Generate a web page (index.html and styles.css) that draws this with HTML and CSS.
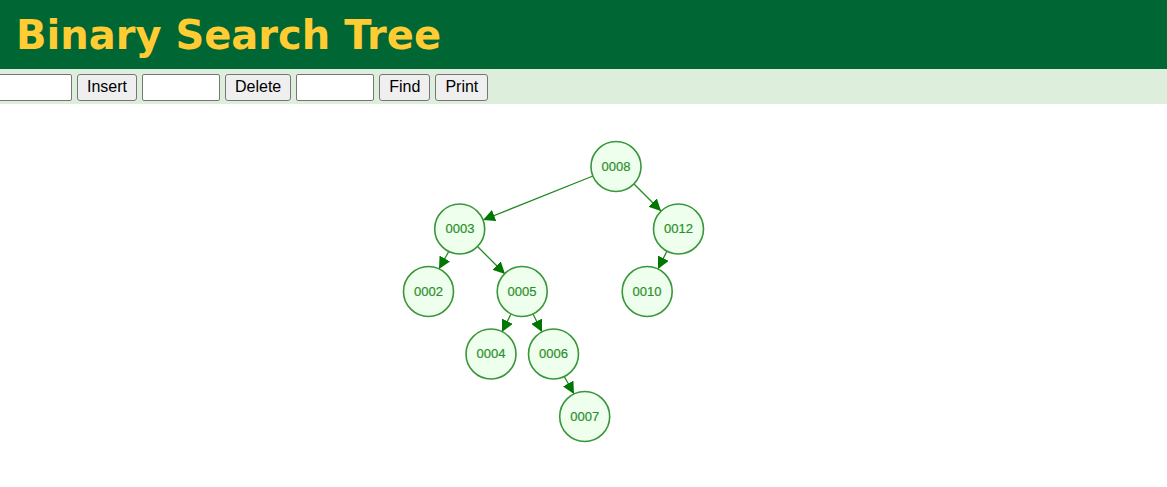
FILE: index.html
```html
<!DOCTYPE html>
<html lang="en">
<head>
<meta charset="utf-8">
<title>Binary Search Tree</title>
<link rel="stylesheet" href="styles.css">
</head>
<body>
<header class="header"><h1 class="title">Binary Search Tree</h1></header>
<form class="controls">
  <input class="field" type="text" aria-label="Value to insert">
  <button class="button" type="button">Insert</button>
  <input class="field" type="text" aria-label="Value to delete">
  <button class="button" type="button">Delete</button>
  <input class="field" type="text" aria-label="Value to find">
  <button class="button" type="button">Find</button>
  <button class="button" type="button">Print</button>
</form>
<main>
  <svg class="tree" viewBox="0 0 1167 380" role="img" aria-label="Tree">
    <defs>
      <marker id="arrow" viewBox="0 0 12 12" refX="12" refY="6" markerWidth="12" markerHeight="12" markerUnits="userSpaceOnUse" orient="auto">
        <path class="arrowhead" d="M0 0L12 6L0 12Z"/>
      </marker>
    </defs>
    <g class="edges">
      <path d="M593 72L483 116"/>
      <path d="M634 80L661 107"/>
      <path d="M667 147L658 165"/>
      <path d="M449 147L439 165"/>
      <path d="M478 143L505 170"/>
      <path d="M511 210L502 228"/>
      <path d="M533 210L542 228"/>
      <path d="M564 272L574 290"/>
    </g>
    <g class="nodes">
      <circle cx="616" cy="62.5" r="25"/><text x="616" y="67">0008</text>
      <circle cx="459.7" cy="125" r="25"/><text x="460" y="129">0003</text>
      <circle cx="678.5" cy="125" r="25"/><text x="678.5" y="129">0012</text>
      <circle cx="428.5" cy="187.5" r="25"/><text x="428.5" y="192">0002</text>
      <circle cx="522.2" cy="187.5" r="25"/><text x="522" y="192">0005</text>
      <circle cx="647.2" cy="187.5" r="25"/><text x="647" y="192">0010</text>
      <circle cx="491" cy="250" r="25"/><text x="491" y="254">0004</text>
      <circle cx="553.5" cy="250" r="25"/><text x="553.5" y="254">0006</text>
      <circle cx="584.7" cy="312.5" r="25"/><text x="584.7" y="317">0007</text>
    </g>
  </svg>
</main>
</body>
</html>
```
FILE: styles.css
```css
body {
  margin: 0;
  background: #fff;
  font-family: "Liberation Sans", Arial, sans-serif;
}
.header {
  padding: 11px 16px 10px;
  background: #006633;
}
.title {
  margin: 0;
  color: #ffcc33;
  font: bold 40px/48px Verdana, "DejaVu Sans", sans-serif;
}
.controls {
  display: flex;
  gap: 5px;
  margin: 0;
  padding: 5px 0 3px;
  background: #ddeedd;
}
.field,
.button {
  box-sizing: border-box;
  height: 27px;
  margin: 0;
  border: 1px solid #767676;
  border-radius: 2px;
  font: 16px/20px "Liberation Sans", Arial, sans-serif;
}
.field {
  width: 78px;
  padding: 1px 2px;
  background: #fff;
}
.field:first-child {
  margin-left: -6px;
}
.button {
  padding: 0 9px 1px;
  border-radius: 3px;
  background: #efefef;
  color: #000;
}
.tree {
  display: block;
  width: 100%;
  height: auto;
}
.edges path {
  fill: none;
  stroke: #218a21;
  stroke-width: 1.3;
  marker-end: url(#arrow);
}
.arrowhead {
  fill: #007700;
}
.nodes circle {
  fill: #eeffee;
  stroke: #3a963a;
  stroke-width: 1.6;
}
.nodes text {
  fill: #2c8f2c;
  stroke: #2c8f2c;
  stroke-width: 0.2;
  font-size: 13px;
  text-anchor: middle;
}
```
